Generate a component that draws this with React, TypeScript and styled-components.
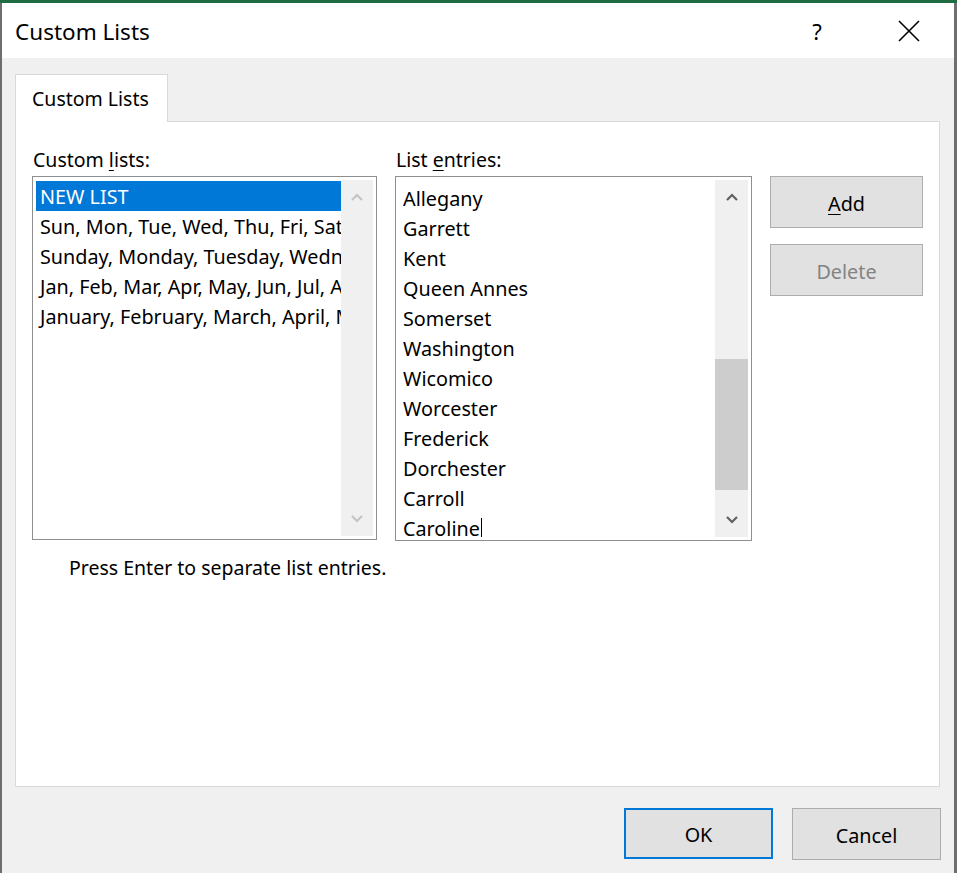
import React from "react";
import styled, { createGlobalStyle } from "styled-components";

const Global = createGlobalStyle`
  html, body { margin: 0; padding: 0; }
  body {
    background: linear-gradient(#1f6b42 0 3px, #6e6e6e 3px);
    font-family: "Noto Sans", "Open Sans", sans-serif;
    width: 957px;
    height: 873px;
    overflow: hidden;
  }
`;

const Window = styled.div`
  margin: 3px 0 0 2px;
  width: 952px;
  height: 870px;
  display: flex;
  flex-direction: column;
  background: #f0f0f0;
`;

const TitleBar = styled.div`
  height: 55px;
  background: #ffffff;
  display: flex;
  align-items: center;
  padding-left: 13px;
  flex-shrink: 0;
`;

const Title = styled.div`
  flex: 1;
  font-size: 22.5px;
  color: #000;
  padding-top: 2px;
`;

const Help = styled.div`
  width: 22px;
  font-size: 22px;
  color: #000;
  margin-right: 70px;
  text-align: center;
`;

const Close = styled.div`
  width: 22px;
  height: 22px;
  margin-right: 34px;
  display: flex;
`;

const Body = styled.div`
  flex: 1;
  display: flex;
  flex-direction: column;
  padding: 16px 14px 15px 13px;
`;

const TabStrip = styled.div`
  display: flex;
`;

const Tab = styled.div`
  width: 153px;
  height: 48px;
  background: #fff;
  border: 1px solid #d9d9d9;
  border-bottom: none;
  display: flex;
  align-items: center;
  padding-left: 16px;
  box-sizing: border-box;
  font-size: 19.5px;
  position: relative;
  z-index: 1;
  margin-bottom: -1px;
`;

const Panel = styled.div`
  height: 666px;
  box-sizing: border-box;
  background: #fff;
  border: 1px solid #d9d9d9;
  padding: 26px 16px 0 16px;
  display: grid;
  grid-template-columns: 345px 357px 153px;
  column-gap: 18px;
  grid-template-rows: 28px 365px auto;
  align-content: start;
`;

const Label = styled.div`
  font-size: 19.5px;
  line-height: 24px;
  color: #000;
  padding-left: 1px;
`;

const U = styled.span`
  text-decoration: underline;
  text-underline-offset: 3px;
  text-decoration-thickness: 1px;
`;

const ListBox = styled.div<{ $short?: boolean }>`
  border: 1px solid #8f8f8f;
  box-sizing: border-box;
  height: ${(p) => (p.$short ? "364px" : "365px")};
  padding: 3px;
  display: flex;
  overflow: hidden;
`;

const Items = styled.div<{ $top: number; $left: number }>`
  flex: 1;
  padding-top: ${(p) => p.$top}px;
  padding-left: ${(p) => p.$left}px;
  overflow: hidden;
  min-width: 0;
`;

const Item = styled.div<{ $selected?: boolean; $pad: number }>`
  height: 30px;
  line-height: 31px;
  font-size: 19.8px;
  white-space: nowrap;
  overflow: hidden;
  padding-left: ${(p) => p.$pad}px;
  background: ${(p) => (p.$selected ? "#0078d7" : "transparent")};
  color: ${(p) => (p.$selected ? "#fff" : "#000")};
`;

const Caret = styled.span`
  display: inline-block;
  width: 1px;
  height: 25px;
  background: #000;
  vertical-align: middle;
  margin-left: 1px;
`;

const ScrollBar = styled.div<{ $w: number }>`
  width: ${(p) => p.$w}px;
  background: #f0f0f0;
  display: flex;
  flex-direction: column;
  flex-shrink: 0;
`;

const ArrowBox = styled.div`
  height: 34px;
  display: flex;
  align-items: center;
  justify-content: center;
  flex-shrink: 0;
`;

const Track = styled.div`
  flex: 1;
  display: flex;
  flex-direction: column;
`;

const Thumb = styled.div<{ $top: number; $h: number }>`
  margin-top: ${(p) => p.$top}px;
  height: ${(p) => p.$h}px;
  background: #cdcdcd;
`;

const ButtonCol = styled.div`
  display: flex;
  flex-direction: column;
  gap: 16px;
`;

const Button = styled.div<{ $disabled?: boolean; $default?: boolean; $w?: number }>`
  width: ${(p) => p.$w ?? 153}px;
  height: ${(p) => (p.$default ? 51 : 52)}px;
  box-sizing: border-box;
  background: #e1e1e1;
  border: ${(p) => (p.$default ? "2px solid #0078d7" : "1px solid #adadad")};
  display: flex;
  align-items: center;
  justify-content: center;
  font-size: 19.8px;
  padding-top: 2px;
  color: ${(p) => (p.$disabled ? "#838383" : "#000")};
`;

const Hint = styled.div`
  grid-column: 1 / span 2;
  font-size: 19.5px;
  padding-left: 37px;
  padding-top: 13px;
  color: #000;
`;

const Footer = styled.div`
  margin-top: 21px;
  margin-right: -1px;
  display: flex;
  justify-content: flex-end;
  gap: 19px;
`;

const Chevron = ({ up, color }: { up?: boolean; color: string }) => (
  <svg width="12" height="8" viewBox="0 0 12 8">
    <path
      d={up ? "M1 7 L6 2 L11 7" : "M1 1 L6 6 L11 1"}
      fill="none"
      stroke={color}
      strokeWidth="2.2"
    />
  </svg>
);

const leftItems = [
  "NEW LIST",
  "Sun, Mon, Tue, Wed, Thu, Fri, Sat",
  "Sunday, Monday, Tuesday, Wednesday, Thursday, Friday, Saturday",
  "Jan, Feb, Mar, Apr, May, Jun, Jul, Aug, Sep, Oct, Nov, Dec",
  "January, February, March, April, May, June, July, August",
];

const rightItems = [
  "Allegany",
  "Garrett",
  "Kent",
  "Queen Annes",
  "Somerset",
  "Washington",
  "Wicomico",
  "Worcester",
  "Frederick",
  "Dorchester",
  "Carroll",
  "Caroline",
];

export default function App() {
  return (
    <>
      <Global />
      <Window>
        <TitleBar>
          <Title>Custom Lists</Title>
          <Help>?</Help>
          <Close>
            <svg width="22" height="22" viewBox="0 0 22 22">
              <path d="M1 1 L21 21 M21 1 L1 21" stroke="#000" strokeWidth="1.6" />
            </svg>
          </Close>
        </TitleBar>
        <Body>
          <TabStrip>
            <Tab>Custom Lists</Tab>
          </TabStrip>
          <Panel>
            <Label>
              Custom <U>l</U>ists:
            </Label>
            <Label>
              List <U>e</U>ntries:
            </Label>
            <div />
            <ListBox $short>
              <Items $top={1} $left={0}>
                {leftItems.map((t, i) => (
                  <Item key={t} $pad={4} $selected={i === 0}>
                    {t}
                  </Item>
                ))}
              </Items>
              <ScrollBar $w={32}>
                <ArrowBox>
                  <Chevron up color="#c4c4c4" />
                </ArrowBox>
                <Track />
                <ArrowBox>
                  <Chevron color="#c4c4c4" />
                </ArrowBox>
              </ScrollBar>
            </ListBox>
            <ListBox>
              <Items $top={3} $left={4}>
                {rightItems.map((t, i) => (
                  <Item key={t} $pad={0}>
                    {t}
                    {i === rightItems.length - 1 && <Caret />}
                  </Item>
                ))}
              </Items>
              <ScrollBar $w={33}>
                <ArrowBox>
                  <Chevron up color="#606060" />
                </ArrowBox>
                <Track>
                  <Thumb $top={145} $h={131} />
                </Track>
                <ArrowBox>
                  <Chevron color="#606060" />
                </ArrowBox>
              </ScrollBar>
            </ListBox>
            <ButtonCol>
              <Button>
                <span>
                  <U>A</U>dd
                </span>
              </Button>
              <Button $disabled>Delete</Button>
            </ButtonCol>
            <Hint>Press Enter to separate list entries.</Hint>
          </Panel>
          <Footer>
            <Button $default $w={149}>OK</Button>
            <Button $w={149}>Cancel</Button>
          </Footer>
        </Body>
      </Window>
    </>
  );
}
